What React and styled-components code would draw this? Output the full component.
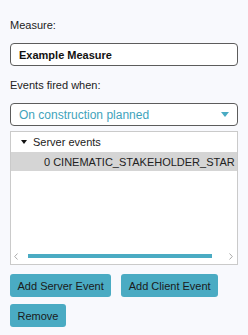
import React from 'react';
import styled, { createGlobalStyle } from 'styled-components';

const Global = createGlobalStyle`
  html, body { margin: 0; padding: 0; background: #f8f9fd; }
  body { font-family: "Liberation Sans", Arial, sans-serif; }
`;

const Panel = styled.div`
  width: 248px;
  height: 335px;
  box-sizing: border-box;
  padding: 19px 10px 0 10px;
  display: flex;
  flex-direction: column;
  background: #f8f9fd;
`;

const Label = styled.div`
  font-size: 11px;
  line-height: 13px;
  color: #222;
  margin-bottom: 11px;
`;

const Field = styled.div`
  box-sizing: border-box;
  height: 23px;
  border: 1px solid #5c5c5c;
  border-radius: 4px;
  background: #fff;
  display: flex;
  align-items: center;
  padding: 0 8px;
  margin-bottom: ${p => p.$mb || 0}px;
`;

const FieldValue = styled.span`
  flex: 1;
  font-size: ${p => (p.$accent ? 12 : 11)}px;
  font-weight: ${p => (p.$accent ? 400 : 700)};
  color: ${p => (p.$accent ? '#3fa3bc' : '#111')};
  white-space: nowrap;
`;

const Caret = styled.svg`
  width: 8px;
  height: 5px;
`;

const ListBox = styled.div`
  margin-top: 5px;
  height: 134px;
  box-sizing: border-box;
  border: 1px solid #cacaca;
  background: #fff;
  display: flex;
  flex-direction: column;
  overflow: hidden;
`;

const Tree = styled.div`
  flex: 1;
  overflow: hidden;
`;

const GroupRow = styled.div`
  height: 20px;
  display: flex;
  align-items: center;
  padding-left: 10px;
  font-size: 11px;
  color: #222;
  white-space: nowrap;
`;

const Toggle = styled.svg`
  width: 6px;
  height: 4px;
  margin-right: 6px;
`;

const ItemRow = styled.div`
  height: 19px;
  display: flex;
  align-items: center;
  padding-left: 33px;
  font-size: 11px;
  color: #222;
  white-space: nowrap;
  overflow: hidden;
  background: ${p => (p.$selected ? '#d5d5d5' : 'transparent')};
`;

const HScroll = styled.div`
  height: 14px;
  flex: none;
  display: flex;
  align-items: center;
  padding: 0 4px 0 3px;
  margin-bottom: 1px;
`;

const Arrow = styled.svg`
  width: 4px;
  height: 7px;
  flex: none;
`;

const Thumb = styled.div`
  width: 184px;
  height: 4px;
  margin-left: 10px;
  background: #4aabc3;
`;

const Spacer = styled.div`
  flex: 1;
`;

const ButtonRow = styled.div`
  display: flex;
  gap: 10px;
  margin-top: ${p => p.$mt}px;
`;

const Button = styled.button`
  height: 23px;
  padding: 0 7.5px;
  border: none;
  border-radius: 3px;
  background: #4aabc3;
  color: #1a1a1a;
  font-family: "Liberation Sans", Arial, sans-serif;
  font-size: 11px;
  cursor: pointer;
`;

export default function App() {
  return (
    <>
      <Global />
      <Panel>
        <Label>Measure:</Label>
        <Field $mb={13}>
          <FieldValue>Example Measure</FieldValue>
        </Field>
        <Label>Events fired when:</Label>
        <Field>
          <FieldValue $accent>On construction planned</FieldValue>
          <Caret viewBox="0 0 8 5">
            <path d="M0 0 L8 0 L4 5 Z" fill="#4aabc3" />
          </Caret>
        </Field>
        <ListBox>
          <Tree>
            <GroupRow>
              <Toggle viewBox="0 0 6 4">
                <path d="M0 0 L6 0 L3 4 Z" fill="#111" />
              </Toggle>
              Server events
            </GroupRow>
            <ItemRow $selected>0 CINEMATIC_STAKEHOLDER_STAR</ItemRow>
          </Tree>
          <HScroll>
            <Arrow viewBox="0 0 4 7">
              <path d="M3.5 0.5 L0.7 3.5 L3.5 6.5" fill="none" stroke="#a0a0a0" strokeWidth="0.9" />
            </Arrow>
            <Thumb />
            <Spacer />
            <Arrow viewBox="0 0 4 7">
              <path d="M0.5 0.5 L3.3 3.5 L0.5 6.5" fill="none" stroke="#a0a0a0" strokeWidth="0.9" />
            </Arrow>
          </HScroll>
        </ListBox>
        <ButtonRow $mt={9}>
          <Button>Add Server Event</Button>
          <Button>Add Client Event</Button>
        </ButtonRow>
        <ButtonRow $mt={7}>
          <Button>Remove</Button>
        </ButtonRow>
      </Panel>
    </>
  );
}
